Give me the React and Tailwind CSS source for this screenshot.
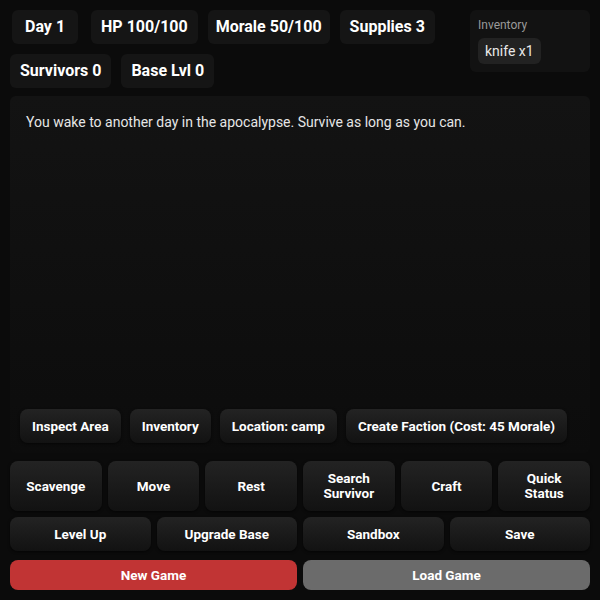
import React from "react";

const stats = [
    { label: "Day 1", cls: "ml-[2px] mr-[3px] px-[13px]" },
    { label: "HP 100/100", cls: "px-[10px]" },
    { label: "Morale 50/100", cls: "px-[8px]" },
    { label: "Supplies 3", cls: "px-[10px]" },
    { label: "Survivors 0", cls: "px-[10px]" },
    { label: "Base Lvl 0", cls: "px-[10px]" },
];
const actions = ["Inspect Area", "Inventory", "Location: camp", "Create Faction (Cost: 45 Morale)"];
const mainRow = ["Scavenge", "Move", "Rest", "Search Survivor", "Craft", "Quick Status"];
const secondRow = ["Level Up", "Upgrade Base", "Sandbox", "Save"];

function Btn({ children, className = "" }) {
    return (
        <button
            className={
                "rounded-lg bg-gradient-to-b from-[#232323] to-[#121212] text-white font-bold text-[13.5px] leading-[15px] shadow-[0_1px_3px_rgba(0,0,0,0.6)] " +
                className
            }
        >
            {children}
        </button>
    );
}

export default function App() {
    return (
        <div
            className="w-[600px] h-[600px] bg-[#0b0b0b] text-white p-[10px] flex flex-col overflow-hidden"
            style={{ fontFamily: "Roboto, 'Noto Sans', sans-serif" }}
        >
            {/* Top: stats and inventory */}
            <div className="flex gap-[10px]">
                <div className="flex-1 flex flex-wrap gap-[10px] content-start">
                    {stats.map((s) => (
                        <div
                            key={s.label}
                            className={
                                "h-[34px] flex items-center rounded-md bg-[#151515] font-bold text-[16px] whitespace-nowrap " +
                                s.cls
                            }
                        >
                            {s.label}
                        </div>
                    ))}
                </div>
                <div className="w-[120px] h-[62px] rounded-md bg-[#121212] px-2 pt-[8px]">
                    <div className="text-[12px] leading-[14px] text-[#9a9a9a]">Inventory</div>
                    <div className="mt-[6px] inline-flex h-[26px] items-center px-[7px] rounded-md bg-[#222222] text-[14px] text-[#e8e8e8]">
                        knife x1
                    </div>
                </div>
            </div>

            {/* Log panel */}
            <div className="mt-[8px] flex-1 rounded-md bg-gradient-to-b from-[#131313] to-[#0c0c0c] p-[10px] flex flex-col">
                <p className="px-[6px] pt-[6px] text-[14px] leading-[20px] text-[#e6e6e6]">
                    You wake to another day in the apocalypse. Survive as long as you can.
                </p>
                <div className="flex-1" />
                <div className="flex gap-[9px]">
                    {actions.map((a) => (
                        <Btn key={a} className="h-[34px] px-[12px] whitespace-nowrap">
                            {a}
                        </Btn>
                    ))}
                </div>
            </div>

            {/* Main controls */}
            <div className="mt-[8px] grid grid-cols-6 gap-[6px]">
                {mainRow.map((b) => (
                    <Btn key={b} className="h-[50px] px-[12px]">
                        {b}
                    </Btn>
                ))}
            </div>
            <div className="mt-[6px] grid grid-cols-4 gap-[6px]">
                {secondRow.map((b) => (
                    <Btn key={b} className="h-[34px]">
                        {b}
                    </Btn>
                ))}
            </div>
            <div className="mt-[9px] grid grid-cols-2 gap-[6px]">
                <button className="h-[30px] rounded-lg bg-[#c13434] text-white font-bold text-[13.5px]">
                    New Game
                </button>
                <button className="h-[30px] rounded-lg bg-[#6b6b6b] text-white font-bold text-[13.5px]">
                    Load Game
                </button>
            </div>
        </div>
    );
}
